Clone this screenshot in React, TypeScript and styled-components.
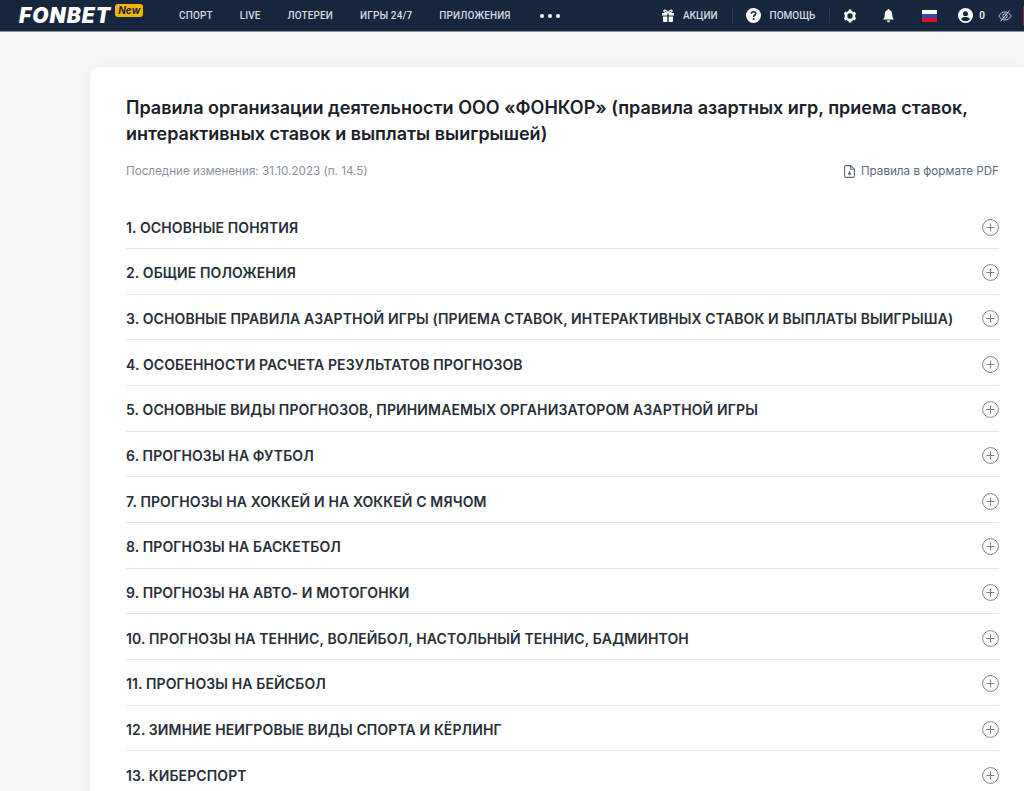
import React from 'react'
import styled, { createGlobalStyle } from 'styled-components'

const GlobalStyle = createGlobalStyle`
  html, body {
    margin: 0;
    height: 100%;
    overflow: hidden;
    background: #F6F6F7;
  }
`
const Wrapper = styled.div`
  width: 100%;
  height: 791px;
  overflow: hidden;
  background: #F6F6F7;
  font-family: Inter, sans-serif;
`
const Header = styled.header`
  display: flex;
  align-items: center;
  height: 32px;
  background: #16263D;
  border-bottom: 1px solid #8A929E;
  box-sizing: border-box;
  padding: 0 0 0 19px;
  font-family: Roboto, sans-serif;
`
const Logo = styled.div`
  display: flex;
  align-items: flex-start;
  width: 160px;
  flex: none;
`
const LogoText = styled.span`
  font-family: Inter, sans-serif;
  font-weight: 900;
  font-style: italic;
  font-size: 21px;
  line-height: 24px;
  letter-spacing: 1px;
  color: #fff;
`
const NewBadge = styled.span`
  margin: 0 0 0 4px;
  padding: 0 3px;
  height: 13px;
  border-radius: 3px;
  background: #F7B500;
  color: #16263D;
  font-family: Inter, sans-serif;
  font-weight: 700;
  font-style: italic;
  font-size: 10px;
  line-height: 13px;
`
const Nav = styled.nav`
  display: flex;
  align-items: center;
  gap: 27px;
`
const NavItem = styled.span`
  color: #D5DAE1;
  font-size: 10px;
  font-weight: 500;
  letter-spacing: 0.13px;
  white-space: nowrap;
`
const Dots = styled.span`
  display: flex;
  gap: 4px;
  margin-left: 2px;
  i {
    width: 4px;
    height: 4px;
    border-radius: 50%;
    background: #fff;
  }
`
const Tools = styled.div`
  display: flex;
  align-items: center;
  margin-left: auto;
`
const ToolLink = styled.span`
  display: flex;
  align-items: center;
  gap: 9px;
  color: #D5DAE1;
  font-size: 10px;
  font-weight: 500;
  white-space: nowrap;
`
const Sep = styled.span`
  width: 1px;
  height: 15px;
  background: #2B3A50;
  margin: 0 13px 0 14px;
`
const IconSlot = styled.span<{ $gap: number }>`
  display: flex;
  align-items: center;
  margin-right: ${props => props.$gap}px;
`
const Flag = styled.span`
  display: block;
  width: 15px;
  height: 12px;
  background: linear-gradient(#fff 0 33%, #2A4FB0 33% 66%, #E0102A 66%);
`
const Balance = styled.span`
  color: #fff;
  font-size: 10px;
  font-weight: 500;
  margin: 0 13px 0 6px;
`
const EdgeButton = styled.span`
  width: 1px;
  height: 19px;
  margin-left: 11px;
  background: #8A2F35;
`
const Card = styled.main`
  margin: 35px 0 0 90px;
  padding: 28px 25px 0 36px;
  background: #fff;
  border-radius: 10px 0 0 0;
  box-shadow: 0 0 12px rgba(20, 30, 50, 0.03);
`
const Title = styled.h1`
  margin: 0;
  color: #1A2029;
  font-size: 18px;
  font-weight: 600;
  line-height: 26px;
`
const Meta = styled.div`
  display: flex;
  justify-content: space-between;
  align-items: center;
  margin: 14px 0 22.5px;
  height: 20px;
  font-size: 11.66px;
`
const Changed = styled.span`
  color: #8B929E;
`
const PdfLink = styled.a`
  display: flex;
  align-items: center;
  gap: 6px;
  color: #5B6B82;
`
const Row = styled.div`
  display: flex;
  justify-content: space-between;
  align-items: center;
  box-sizing: border-box;
  height: 45.67px;
  padding-top: 3px;
  border-bottom: 1px solid #E5E7EB;
`
const RowTitle = styled.span`
  color: #272E38;
  font-size: 14px;
  font-weight: 600;
  letter-spacing: 0.12px;
  white-space: nowrap;
`

const GiftIcon = () => (
  <svg width={12} height={14} viewBox="1 0 12 14" fill="#fff">
    <path d="M1 4h5.300v2.400H1zM7.700 4H13v2.400H7.700zM2 7.400h4.300V13H3a1 1 0 0 1-1-1zM7.700 7.400H12V12a1 1 0 0 1-1 1H7.700z" />
    <path d="M7 4C5.500 1 3.600.6 3 1.600 2.400 2.800 4.500 4 7 4zM7 4c1.500-3 3.400-3.400 4-2.400C11.600 2.800 9.500 4 7 4z" fill="none" stroke="#fff" strokeWidth={1.200} />
  </svg>
)
const HelpIcon = () => (
  <svg width={15} height={15} viewBox="0 0 16 16">
    <circle cx={8} cy={8} r={8} fill="#fff" />
    <path d="M5.600 6.200C5.700 4.800 6.700 4 8 4c1.400 0 2.400.9 2.400 2 0 1.800-2.300 1.700-2.300 3.500" fill="none" stroke="#16263D" strokeWidth={1.700} />
    <circle cx={8.100} cy={11.800} r={1.100} fill="#16263D" />
  </svg>
)
const GearIcon = () => (
  <svg width={14} height={14} viewBox="0 0 14 14">
    <circle cx={7} cy={7} r={4} fill="none" stroke="#fff" strokeWidth={2.600} />
    <path d="M7 .6v2.400M7 11v2.400M1.500 3.800l2 1.200M10.500 9l2 1.200M1.500 10.200l2-1.200M10.500 5l2-1.200" stroke="#fff" strokeWidth={2.800} />
  </svg>
)
const BellIcon = () => (
  <svg width={13} height={14} viewBox="0 0 13 14" fill="#fff">
    <path d="M6.500 1C4 1 2.800 3 2.800 5.200c0 2.800-.6 3.800-1.800 5.300h11c-1.200-1.500-1.800-2.500-1.800-5.300C10.200 3 9 1 6.500 1z" />
    <circle cx={6.500} cy={1} r={1} />
    <path d="M4.800 11.500h3.400a1.700 1.700 0 0 1-3.400 0z" />
  </svg>
)
const UserIcon = () => (
  <svg width={15} height={15} viewBox="0 0 15 15">
    <circle cx={7.500} cy={7.500} r={7.500} fill="#fff" />
    <circle cx={7.500} cy={5.800} r={2.500} fill="#16263D" />
    <path d="M3 11.200c.8-1.700 2.500-2.300 4.500-2.300s3.700.6 4.500 2.300a6 6 0 0 1-9 0z" fill="#16263D" />
  </svg>
)
const EyeOffIcon = () => (
  <svg width={14} height={12} viewBox="0 0 14 12" fill="none" stroke="#C3C8D0" strokeWidth={1}>
    <path d="M.8 6C2.500 3.200 4.600 2 7 2s4.500 1.200 6.200 4C11.500 8.800 9.400 10 7 10S2.500 8.800.8 6z" />
    <circle cx={7} cy={6} r={2.200} />
    <path d="M11.500.6 2.500 11.400" />
  </svg>
)
const PdfIcon = () => (
  <svg width={11} height={13} viewBox="0 0 11 13" fill="none" stroke="#5B6B82" strokeWidth={1.100}>
    <path d="M2 .6h4.800l3.600 3.600V11a1.400 1.400 0 0 1-1.400 1.400H2A1.400 1.400 0 0 1 .6 11V2A1.400 1.400 0 0 1 2 .6z" />
    <path d="M6.600.8v3.400h3.600M5.500 5.800v3.600M3.900 8l1.600 1.600L7.100 8" />
  </svg>
)
const PlusIcon = () => (
  <svg width={17} height={17} viewBox="0 0 17 17" fill="none" stroke="#7B828D" strokeWidth={1}>
    <circle cx={8.500} cy={8.500} r={7.900} />
    <path d="M8.500 4.500v8M4.500 8.500h8" />
  </svg>
)

const navItems = ['СПОРТ', 'LIVE', 'ЛОТЕРЕИ', 'ИГРЫ 24/7', 'ПРИЛОЖЕНИЯ']

const sections = [
  '1. ОСНОВНЫЕ ПОНЯТИЯ',
  '2. ОБЩИЕ ПОЛОЖЕНИЯ',
  '3. ОСНОВНЫЕ ПРАВИЛА АЗАРТНОЙ ИГРЫ (ПРИЕМА СТАВОК, ИНТЕРАКТИВНЫХ СТАВОК И ВЫПЛАТЫ ВЫИГРЫША)',
  '4. ОСОБЕННОСТИ РАСЧЕТА РЕЗУЛЬТАТОВ ПРОГНОЗОВ',
  '5. ОСНОВНЫЕ ВИДЫ ПРОГНОЗОВ, ПРИНИМАЕМЫХ ОРГАНИЗАТОРОМ АЗАРТНОЙ ИГРЫ',
  '6. ПРОГНОЗЫ НА ФУТБОЛ',
  '7. ПРОГНОЗЫ НА ХОККЕЙ И НА ХОККЕЙ С МЯЧОМ',
  '8. ПРОГНОЗЫ НА БАСКЕТБОЛ',
  '9. ПРОГНОЗЫ НА АВТО- И МОТОГОНКИ',
  '10. ПРОГНОЗЫ НА ТЕННИС, ВОЛЕЙБОЛ, НАСТОЛЬНЫЙ ТЕННИС, БАДМИНТОН',
  '11. ПРОГНОЗЫ НА БЕЙСБОЛ',
  '12. ЗИМНИЕ НЕИГРОВЫЕ ВИДЫ СПОРТА И КЁРЛИНГ',
  '13. КИБЕРСПОРТ',
]

const App = (): JSX.Element => (
  <Wrapper>
    <GlobalStyle />
    <Header>
      <Logo>
        <LogoText>FONBET</LogoText>
        <NewBadge>New</NewBadge>
      </Logo>
      <Nav>
        {navItems.map(item => (
          <NavItem key={item}>{item}</NavItem>
        ))}
        <Dots><i /><i /><i /></Dots>
      </Nav>
      <Tools>
        <ToolLink><GiftIcon />АКЦИИ</ToolLink>
        <Sep />
        <ToolLink><HelpIcon />ПОМОЩЬ</ToolLink>
        <Sep />
        <IconSlot $gap={25}><GearIcon /></IconSlot>
        <IconSlot $gap={27}><BellIcon /></IconSlot>
        <IconSlot $gap={21}><Flag /></IconSlot>
        <UserIcon />
        <Balance>0</Balance>
        <EyeOffIcon />
        <EdgeButton />
      </Tools>
    </Header>
    <Card>
      <Title>
        Правила организации деятельности ООО «ФОНКОР» (правила азартных игр, приема ставок, интерактивных ставок и выплаты выигрышей)
      </Title>
      <Meta>
        <Changed>Последние изменения: 31.10.2023 (п. 14.5)</Changed>
        <PdfLink><PdfIcon />Правила в формате PDF</PdfLink>
      </Meta>
      {sections.map(section => (
        <Row key={section}>
          <RowTitle>{section}</RowTitle>
          <PlusIcon />
        </Row>
      ))}
    </Card>
  </Wrapper>
)

export default App
